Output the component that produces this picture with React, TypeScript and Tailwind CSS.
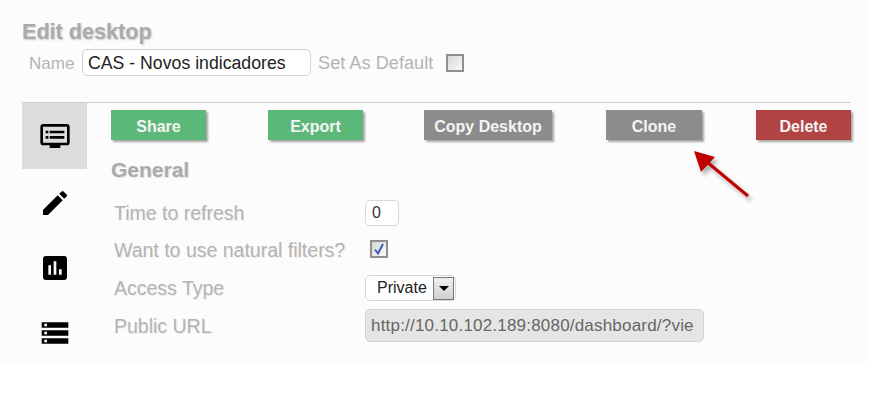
import { MdAssessment, MdDvr, MdEdit, MdStorage } from "react-icons/md";

const labelClass = "text-[19.5px] leading-[22px] text-[#b4b4b4] [text-shadow:1px_1px_1px_rgba(0,0,0,0.08)]";
const buttonClass = "h-[30px] pt-[3px] text-[16px] font-bold text-[#f4f4f4] shadow-[2px_2px_2px_rgba(0,0,0,0.35)] flex items-center justify-center";

function Checkbox({ checked }: { checked?: boolean }) {
  return (
    <span className="w-[18px] h-[18px] border-2 border-[#8f8f8f] bg-gradient-to-br from-[#d8d8d8] to-[#fafafa] flex items-center justify-center">
      {checked && (
        <svg width="14" height="14" viewBox="0 0 14 14">
          <path d="M3 7.5 L6 11.5 L11 2" fill="none" stroke="#3f5fb5" strokeWidth="2" />
        </svg>
      )}
    </span>
  );
}

export default function App() {
  return (
    <div className="relative w-[886px] h-[412px] bg-white font-['Liberation_Sans',Arial,sans-serif]">
      <div className="w-[868px] h-[364px] bg-[#fcfcfc] pl-[22px] pr-[17px] pt-[20px]">
        {/* Header */}
        <h1 className="text-[21.6px] leading-[24px] font-bold text-[#ababab] [text-shadow:1px_1px_2px_rgba(0,0,0,0.2)]">Edit desktop</h1>
        <div className="flex items-center mt-[5px] ml-[7px] h-[27px]">
          <span className="text-[17px] text-[#b4b4b4] w-[53px] pt-[3px]">Name</span>
          <div className="w-[229px] h-[27px] border border-[#d2d2d2] rounded-[5px] bg-white pl-[5px] text-[17.7px] leading-[27px] text-[#222]">CAS - Novos indicadores</div>
          <span className="text-[18.2px] text-[#b4b4b4] ml-[7px] w-[128px] pt-[3px]">Set As Default</span>
          <Checkbox />
        </div>

        <div className="flex mt-[26px] border-t border-[#cfcfcf]">
          {/* Sidebar */}
          <nav className="w-[65px] flex flex-col items-center text-black">
            <div className="w-full h-[66px] bg-[#dcdcdc] flex items-center justify-center">
              <MdDvr size={32} />
            </div>
            <div className="h-[67px] flex items-center justify-center"><MdEdit size={32} /></div>
            <div className="h-[64px] flex items-center justify-center"><MdAssessment size={32} /></div>
            <div className="h-[66px] flex items-center justify-center"><MdStorage size={32} /></div>
          </nav>

          {/* Content */}
          <div className="flex-1 pl-[24px] pt-[7px]">
            <div className="flex">
              <div className={`${buttonClass} w-[95px] bg-[#5cb879]`}>Share</div>
              <div className={`${buttonClass} w-[95px] ml-[62px] bg-[#5cb879]`}>Export</div>
              <div className={`${buttonClass} w-[128px] ml-[61px] bg-[#8c8c8c]`}>Copy Desktop</div>
              <div className={`${buttonClass} w-[96px] ml-[54px] bg-[#8c8c8c]`}>Clone</div>
              <div className={`${buttonClass} w-[95px] ml-[54px] bg-[#b24343]`}>Delete</div>
            </div>
            <h2 className="mt-[18px] text-[21px] leading-[24px] font-bold text-[#ababab] [text-shadow:1px_1px_1px_rgba(0,0,0,0.12)]">General</h2>

            <div className="grid grid-cols-[251px_1fr] pl-[3px] mt-[12px] items-center">
              <span className={`${labelClass} h-[37px] flex items-center`}>Time to refresh</span>
              <div className="w-[34px] h-[26px] border border-[#d8d8d8] rounded-[5px] bg-white pl-[6px] text-[16px] leading-[24px] text-[#333]">0</div>
              <span className={`${labelClass} h-[38px] flex items-center`}>Want to use natural filters?</span>
              <div className="ml-[5px] -mt-[2px]"><Checkbox checked /></div>
              <span className={`${labelClass} h-[38px] flex items-center`}>Access Type</span>
              <div className="w-[91px] h-[26px] border border-[#d8d8d8] rounded-[5px] bg-white flex items-center justify-between pl-[11px] pr-[1px] text-[16px] text-[#222]">
                Private
                <span className="w-[21px] h-[23px] border border-[#777] bg-gradient-to-b from-[#f0f0f0] to-[#cfcfcf] flex items-center justify-center">
                  <span className="border-x-[5px] border-x-transparent border-t-[5px] border-t-black" />
                </span>
              </div>
              <span className={`${labelClass} h-[37px] flex items-center`}>Public URL</span>
              <div className="w-[339px] h-[33px] border border-[#d2d2d2] rounded-[5px] bg-[#e5e5e5] pl-[5px] text-[17px] leading-[31px] text-[#666] tracking-[0.2px] overflow-hidden whitespace-nowrap">http://10.10.102.189:8080/dashboard/?vie</div>
            </div>
          </div>
        </div>
      </div>

      {/* Annotation arrow */}
      <svg className="absolute left-[685px] top-[143px]" width="80" height="70" viewBox="0 0 80 70">
        <g opacity="0.3" transform="translate(3 4)" style={{ filter: "blur(2px)" }}>
          <path d="M63 53 L22 19" stroke="#000" strokeWidth="3" />
          <path d="M9 8 L30 14 L16 29 Z" fill="#000" />
        </g>
        <path d="M63 53 L22 19" stroke="#c00000" strokeWidth="3" />
        <path d="M9 8 L30 14 L16 29 Z" fill="#c00000" />
      </svg>
    </div>
  );
}
